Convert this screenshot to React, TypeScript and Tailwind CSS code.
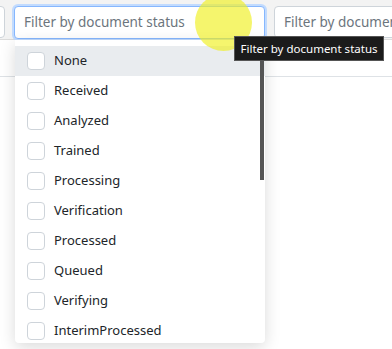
const statuses = [
  'None',
  'Received',
  'Analyzed',
  'Trained',
  'Processing',
  'Verification',
  'Processed',
  'Queued',
  'Verifying',
  'InterimProcessed',
];

const App = () => {
  return (
    <div className="relative w-[392px] h-[349px] overflow-hidden bg-white" style={{ fontFamily: '"Noto Sans", sans-serif' }}>
      {/* Filter row */}
      <div className="flex gap-[9px] bg-[#f3f3f3] border-b border-[#dcdcdc] h-[40px] pt-[6px] -ml-[10px]">
        <div className="w-[15px] h-[32px] shrink-0 bg-white border border-[#ced4da] rounded-[4px]"></div>
        <div className="w-[251px] h-[33px] shrink-0 bg-white border border-[#86b7fe] rounded-[4px] ring-2 ring-[#c2dbfe] flex items-center px-[9px] text-[13.5px] text-[#6c757d]">
          Filter by document status
        </div>
        <div className="w-[140px] h-[32px] shrink-0 bg-white border border-[#ced4da] rounded-[4px] flex items-center px-[9px] text-[13.5px] text-[#6c757d] whitespace-nowrap overflow-hidden">
          Filter by document
        </div>
      </div>
      <div className="h-[37px] border-b border-[#dee2e6]"></div>

      {/* Dropdown */}
      <div className="absolute left-[15px] top-[40px] w-[250px] h-[303px] bg-white rounded-b-[4px] shadow-[0_4px_16px_rgba(0,0,0,0.15)] pt-[6px] overflow-hidden">
        {statuses.map((s, i) => (
          <div
            key={s}
            className={`flex items-center h-[30px] pl-[12px] gap-[9px] text-[13px] text-[#212529] ${i === 0 ? 'bg-[#e9ecef]' : ''}`}
          >
            <span className="w-[18px] h-[18px] rounded-[4px] border border-[#ced4da] bg-white shrink-0"></span>
            <span>{s}</span>
          </div>
        ))}
        <div className="absolute right-[1px] top-[20px] w-[4px] h-[120px] bg-[#555]"></div>
      </div>

      {/* click highlight */}
      <div className="absolute left-[195px] top-[-6px] w-[57px] h-[57px] rounded-full bg-[rgba(240,240,30,0.65)]"></div>

      {/* Tooltip */}
      <div className="absolute left-[234px] top-[36px] w-[150px] h-[25px] bg-[#1b1b1b] border border-[#555] flex items-center justify-center text-[11.5px] text-white whitespace-nowrap">
        Filter by document status
      </div>
    </div>
  );
};

export default App;
